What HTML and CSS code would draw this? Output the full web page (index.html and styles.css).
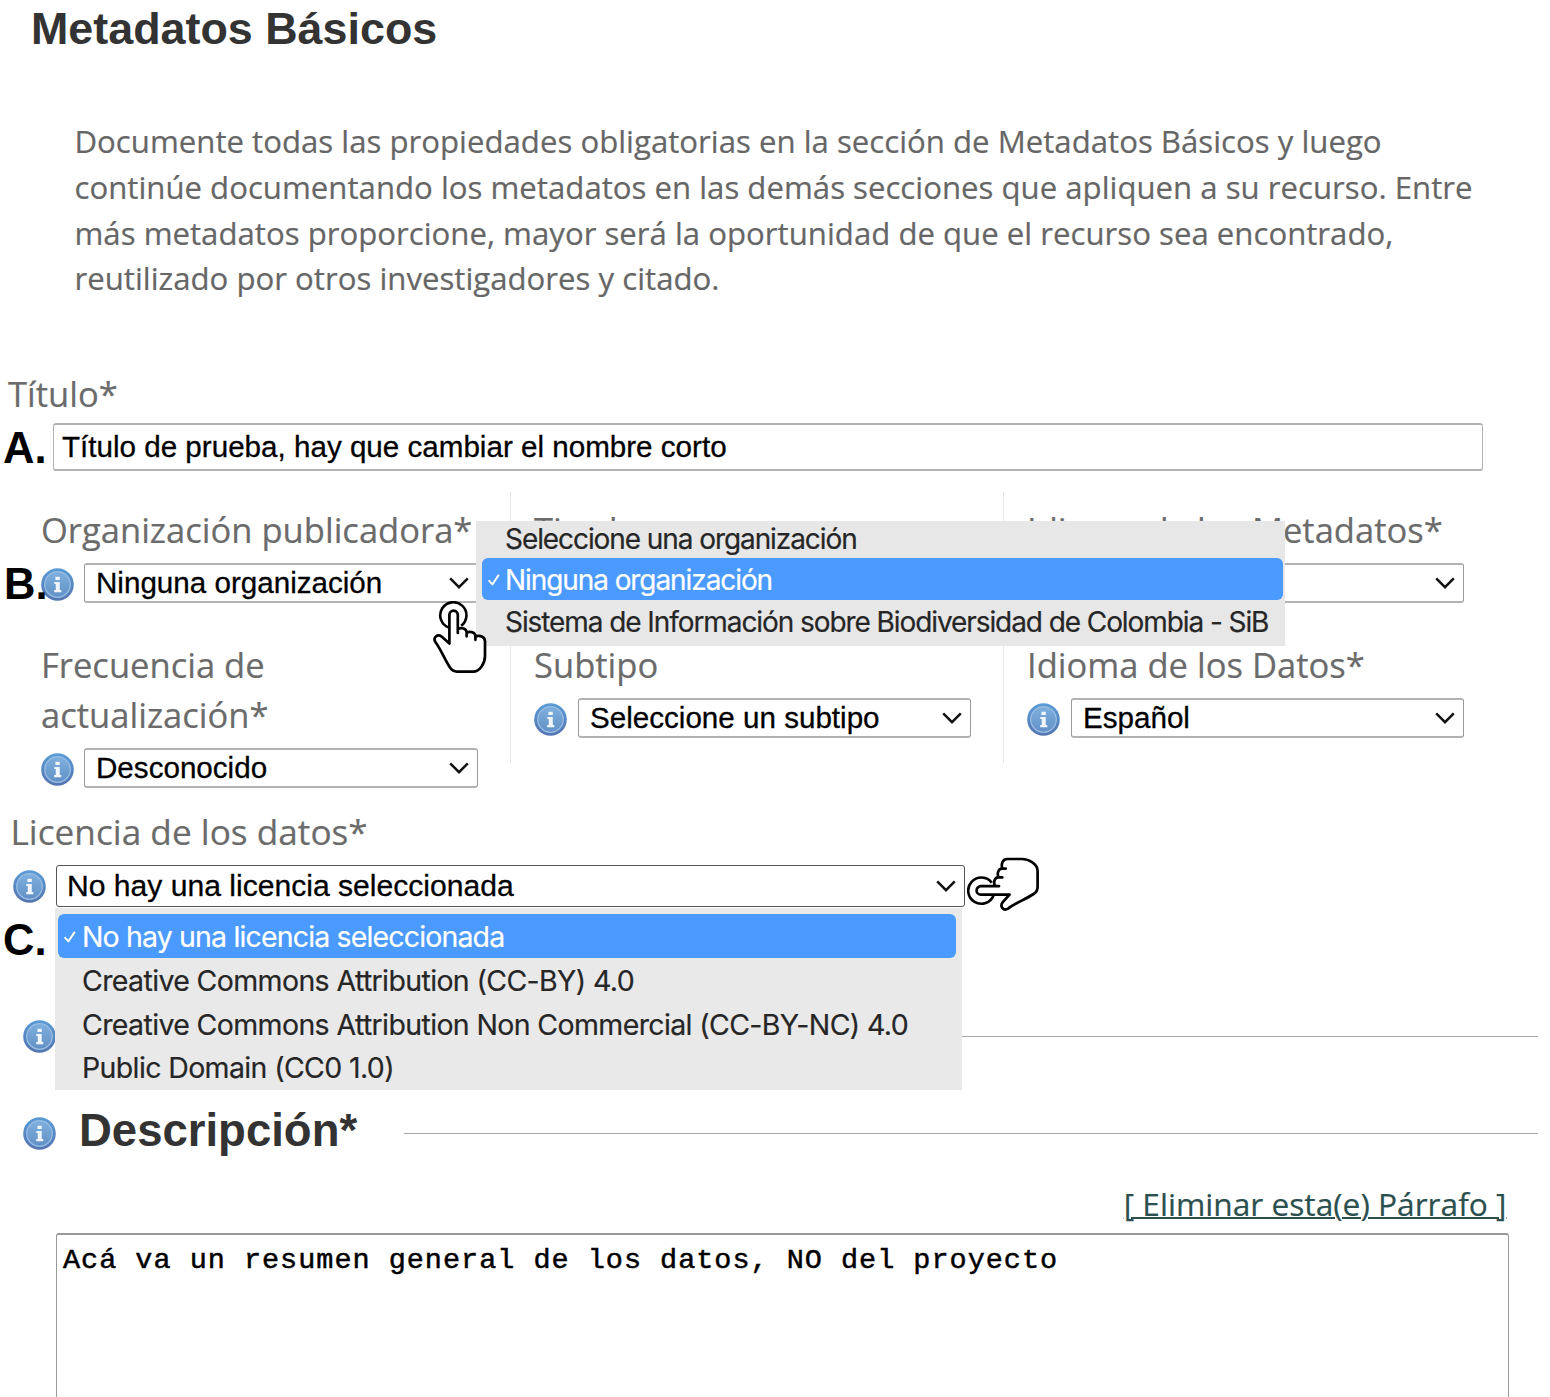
FILE: index.html
```html
<!DOCTYPE html>
<html lang="es">
<head>
<meta charset="utf-8">
<title>Metadatos Básicos</title>
<link rel="stylesheet" href="styles.css">
</head>
<body>
<svg class="defs" width="0" height="0">
  <defs>
    <linearGradient id="ball" x1="0" y1="0" x2="0" y2="1">
      <stop offset="0" stop-color="#5a9cd6"/><stop offset="1" stop-color="#5575b0"/>
    </linearGradient>
    <linearGradient id="core" x1="0" y1="0" x2="0" y2="1">
      <stop offset="0" stop-color="#7fb0de"/><stop offset="1" stop-color="#6290c6"/>
    </linearGradient>
    <symbol id="info" viewBox="0 0 32 32">
      <circle cx="16" cy="16" r="15.8" fill="url(#ball)"/>
      <circle cx="16" cy="16" r="12.4" fill="url(#core)" stroke="#98bee4" stroke-width="1.2"/>
      <path d="M14 8.500h4.200v3.200H14zM12.900 13.600h5.300v7.800h1.500v2h-6.900v-2h1.500v-5.800h-1.400z" fill="#f0f5fb"/>
    </symbol>
    <symbol id="chevron" viewBox="0 0 20 12">
      <path d="M1.200 1.400 10 10.200 18.800 1.400" fill="none" stroke="#111" stroke-width="2.500"/>
    </symbol>
    <symbol id="check" viewBox="0 0 12 12">
      <path d="M1.200 6.800 4.400 10.400 10.400 1.400" fill="none" stroke="#fff" stroke-width="1.900" stroke-linecap="round" stroke-linejoin="round"/>
    </symbol>
    <symbol id="hand" viewBox="0 0 54 74">
      <path d="M15.800 26.600A13.100 13.100 0 1 1 28.200 24.800" fill="none" stroke="#000" stroke-width="2.600"/>
      <path d="M16.400 42.500V13.800a4.200 4.200 0 0 1 8.400 0V32V28.200c3.800-2.200 8.600-.6 8.800 3V35.300V31.600c3.800-1.800 8.600-.4 8.800 3.400V38.800V35.500c4.400-1.800 9.400 0 9.600 4.600V55C52 62 47 70.600 40 70.600H24c-3.200 0-5.200-1.200-7-4C11.600 58.500 8 48.500 2.400 41C-.4 36.500 4.600 32.600 8.600 35.600Z" fill="#fff" stroke="#000" stroke-width="2.700" stroke-linejoin="round"/>
    </symbol>
  </defs>
</svg>

<main class="page">
  <h1 class="page-title">Metadatos Básicos</h1>
  <p class="intro">Documente todas las propiedades obligatorias en la sección de Metadatos Básicos y luego<br>continúe documentando los metadatos en las demás secciones que apliquen a su recurso. Entre<br>más metadatos proporcione, mayor será la oportunidad de que el recurso sea encontrado,<br>reutilizado por otros investigadores y citado.</p>

  <section class="title-field">
    <div class="label">Título*</div>
    <div class="title-row"><b class="step">A.</b><div class="input">Título de prueba, hay que cambiar el nombre corto</div></div>
  </section>

  <section class="grid">
    <div class="col first">
      <div class="group">
        <div class="label">Organización publicadora*</div>
        <div class="control"><b class="step step-b">B.</b><svg class="info"><use href="#info"/></svg><div class="select">Ninguna organización<svg class="chev"><use href="#chevron"/></svg></div></div>
      </div>
      <div class="group">
        <div class="label">Frecuencia de<br>actualización*</div>
        <div class="control"><svg class="info"><use href="#info"/></svg><div class="select">Desconocido<svg class="chev"><use href="#chevron"/></svg></div></div>
      </div>
      <svg class="hand hand-up"><use href="#hand"/></svg>
      <div class="menu menu-org">
        <div class="item">Seleccione una organización</div>
        <div class="item active"><svg class="check"><use href="#check"/></svg>Ninguna organización</div>
        <div class="item">Sistema de Información sobre Biodiversidad de Colombia - SiB</div>
      </div>
    </div>
    <div class="col">
      <div class="group">
        <div class="label">Tipo*</div>
        <div class="control"><svg class="info"><use href="#info"/></svg><div class="select"><svg class="chev"><use href="#chevron"/></svg></div></div>
      </div>
      <div class="group">
        <div class="label">Subtipo</div>
        <div class="control"><svg class="info"><use href="#info"/></svg><div class="select">Seleccione un subtipo<svg class="chev"><use href="#chevron"/></svg></div></div>
      </div>
    </div>
    <div class="col">
      <div class="group">
        <div class="label">Idioma de los Metadatos*</div>
        <div class="control"><svg class="info"><use href="#info"/></svg><div class="select"><svg class="chev"><use href="#chevron"/></svg></div></div>
      </div>
      <div class="group">
        <div class="label">Idioma de los Datos*</div>
        <div class="control"><svg class="info"><use href="#info"/></svg><div class="select">Español<svg class="chev"><use href="#chevron"/></svg></div></div>
      </div>
    </div>
  </section>

  <section class="license">
    <div class="label">Licencia de los datos*</div>
    <div class="control"><svg class="info"><use href="#info"/></svg><div class="select dark">No hay una licencia seleccionada<svg class="chev"><use href="#chevron"/></svg></div></div>
    <svg class="hand hand-left"><use href="#hand"/></svg>
    <b class="step step-c">C.</b>
    <div class="menu menu-lic">
      <div class="item active"><svg class="check"><use href="#check"/></svg>No hay una licencia seleccionada</div>
      <div class="item">Creative Commons Attribution (CC-BY) 4.0</div>
      <div class="item">Creative Commons Attribution Non Commercial (CC-BY-NC) 4.0</div>
      <div class="item">Public Domain (CC0 1.0)</div>
    </div>
  </section>

  <div class="divider"><svg class="info"><use href="#info"/></svg><hr class="rule"></div>
  <div class="divider second"><svg class="info"><use href="#info"/></svg><h2 class="subtitle">Descripción*</h2><hr class="rule"></div>

  <div class="remove"><a class="remove-link">[ Eliminar esta(e) Párrafo ]</a></div>
  <div class="textarea">Acá va un resumen general de los datos, NO del proyecto</div>
</main>
</body>
</html>
```
FILE: styles.css
```css
* { box-sizing: border-box; }
body { margin: 0; background: #fff; font-family: "Open Sans", sans-serif; color: #666; }
.defs { position: absolute; }
.page { width: 1550px; height: 1397px; overflow: hidden; }
.page-title { margin: 0; padding: 3px 0 0 31px; height: 119px; font: bold 44.850px/52px "Liberation Sans", Arial, sans-serif; color: #333; }
.intro { margin: 0; padding-left: 74.500px; height: 250px; font-size: 31.180px; line-height: 45.750px; white-space: nowrap; -webkit-text-stroke: 0.2px; }
.label { font-size: 34.550px; line-height: 50px; white-space: nowrap; color: #6b6b6b; -webkit-text-stroke: 0.2px; }
.title-field { padding-left: 8px; height: 123px; }
.title-field .label { height: 54px; }
.title-row { display: flex; align-items: center; height: 48px; margin-left: -5px; }
.step { font: bold 43.500px/48px "Liberation Sans", Arial, sans-serif; color: #000; }
.title-row .step { width: 50px; flex: none; padding-top: 2px; }
.input { width: 1430px; height: 48px; border: 2px solid #b2b2b2; border-width: 2px 1px; border-radius: 3px; padding-left: 8px; font: 29.600px/44px "Liberation Sans", Arial, sans-serif; color: #000; -webkit-text-stroke: 0.3px; }
.grid { display: grid; grid-template-columns: 510px 493px 547px; grid-template-rows: 271px; }
.col { padding: 12px 0 0 23px; border-left: 1px solid #e6e6e6; position: relative; }
.col.first { border-left: 0; padding-left: 41px; }
.group { margin-bottom: 36px; }
.group .label { margin-bottom: 9px; }
.group .label { padding-top: 0.500px; margin-bottom: 8.500px; }
.control { display: flex; align-items: center; height: 40px; position: relative; }
.info { width: 33px; height: 33px; flex: none; margin: 2px 11px 0 0; display: block; }
.first .info { margin-right: 10px; }
.select { width: 393px; height: 40px; border: solid #b2b2b2; border-width: 2px 1px; border-left-color: #999; border-right-color: #999; border-radius: 3px; display: flex; align-items: center; padding: 0 8px 0 11px; background: #fff; font: 29.600px/36px "Liberation Sans", Arial, sans-serif; color: #000; -webkit-text-stroke: 0.3px; }
.first .select { width: 394px; }
.chev { width: 20px; height: 12px; margin-left: auto; }
.step-b { position: absolute; left: -37px; top: -3px; }
.menu { position: absolute; background: #e7e7e7; font: 28px "Inter", sans-serif; color: #262626; z-index: 2; white-space: nowrap; -webkit-text-stroke: 0.2px; }
.item { display: flex; align-items: center; position: relative; }
.item.active { background: #4b9aff; color: #fff; border-radius: 6px; }
.check { position: absolute; width: 12px; height: 12px; left: 6px; }
.menu-org { left: 476px; top: 29px; width: 809px; height: 125px; padding: 0 2px 0 6px; letter-spacing: -1.080px; }
.menu-org .item { height: 42px; padding: 2px 0 0 23px; }
.menu-org .item:first-child { height: 37px; padding: 0 0 2px 23px; }
.hand { position: absolute; width: 54px; height: 74px; z-index: 3; }
.hand-up { left: 433px; top: 109px; }
.license { position: relative; padding: 43px 0 0 11px; height: 257px; }
.license .label { height: 60px; font-size: 35.200px; margin-left: -0.500px; }
.license .info { margin: 1px 10px 0 2px; }
.select.dark { width: 909px; height: 42px; border: 1px solid #555; border-radius: 3px; font-size: 30.100px; padding-left: 10px; }
.hand-left { left: 977px; top: 84px; transform: rotate(-90deg); }
.step-c { position: absolute; left: 3px; top: 153px; }
.menu-lic { left: 55px; top: 145px; width: 907px; height: 182px; padding: 6px 6px 0 3px; background: #e9e9e9; font-size: 28.500px; letter-spacing: -0.630px; }
.menu-lic .item { height: 43.700px; padding: 2px 0 0 24px; }
.menu-lic .item.active { letter-spacing: -0.850px; }
.divider { display: flex; align-items: center; height: 33px; padding: 0 12px 0 23px; }
.divider .info { margin: 0 23px 0 0; }
.rule { flex: 1; border: 0; height: 1px; background: #aaa; margin: 0; }
.second { margin-top: 64px; }
.subtitle { margin: -6px 47px 0 0; font: bold 45.500px/50px "Liberation Sans", Arial, sans-serif; color: #333; }
.remove { height: 83px; padding: 32px 43.500px 0 0; text-align: right; font-size: 31.700px; line-height: 44px; color: #2b504f; }
.remove-link { text-decoration: underline; text-decoration-thickness: 2px; -webkit-text-stroke: 0.2px; }
.textarea { margin-left: 56px; width: 1453px; height: 180px; border: 2px solid #999; border-width: 2px 1px; border-radius: 3px; padding: 8px 6px; font: 28.500px/36px "Liberation Mono", monospace; letter-spacing: 0.990px; color: #000; -webkit-text-stroke: 0.5px; }
```
